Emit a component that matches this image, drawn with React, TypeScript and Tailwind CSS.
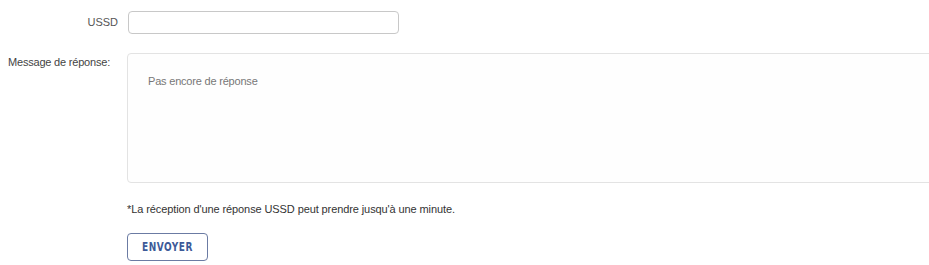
export default function App() {
  return (
    <div className="w-[929px] h-[265px] overflow-hidden bg-white text-[#333] font-['Liberation_Sans',Arial,sans-serif]">
      {/* USSD row */}
      <div className="flex items-center pt-[11px]">
        <label className="w-[121px] shrink-0 pr-[3px] text-right text-[11px] text-[#555]">USSD</label>
        <div className="ml-[7px] h-[23px] w-[271px] shrink-0 rounded-[4px] border border-[#c8c8c8] bg-white" />
      </div>

      {/* Message row */}
      <div className="mt-[19px] flex items-start">
        <label className="w-[127px] shrink-0 pl-[8px] pt-[1px] text-[11px] tracking-[-0.2px] text-[#444] whitespace-nowrap">Message de réponse:</label>
        <div className="h-[130px] w-[820px] shrink-0 rounded-[4px] border border-[#e3e3e3] bg-[#fefefe] px-[20px] pt-[19px] text-[11px] tracking-[-0.2px] text-[#777]">
          Pas encore de réponse
        </div>
      </div>

      {/* Note + button */}
      <div className="ml-[127px]">
        <p className="mt-[18px] text-[11px] tracking-[-0.1px] text-[#333]">
          *La réception d'une réponse USSD peut prendre jusqu'à une minute.
        </p>
        <button className="mt-[15px] flex h-[28px] w-[81px] items-center justify-center rounded-[4px] border border-[#6b7ba3] bg-white font-['DejaVu_Sans_Condensed','DejaVu_Sans',sans-serif] text-[10px] font-bold tracking-[0.5px] text-[#3d5a98]">
          <span className="inline-block scale-y-[1.15]">ENVOYER</span>
        </button>
      </div>
    </div>
  );
}
